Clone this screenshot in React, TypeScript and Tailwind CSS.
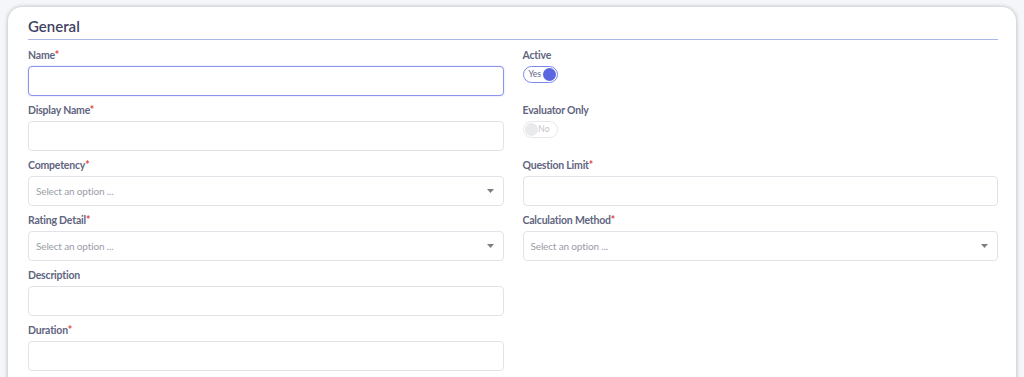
import React from "react";

const Label = ({ text, req }: { text: string; req?: boolean }) => (
  <div className="h-[14px] text-[10.5px] leading-[14px] font-bold tracking-[-0.2px] text-[#5f6580] mb-[4px]">
    {text}
    {req && <span className="text-[#e53e3e]">*</span>}
  </div>
);

const Input = ({ focus }: { focus?: boolean }) => (
  <div
    className={
      focus
        ? "h-[30px] rounded-[4px] border border-[#8b93ea] bg-white shadow-[0_0_2px_rgba(110,120,230,0.35)]"
        : "h-[30px] rounded-[4px] border border-[#e1e3e9] bg-white"
    }
  />
);

const Select = () => (
  <div className="h-[30px] rounded-[4px] border border-[#e1e3e9] bg-white flex items-center justify-between pl-[7px] pr-[9px]">
    <span className="text-[10px] tracking-[-0.15px] text-[#9b9da8]">Select an option ...</span>
    <svg width="7" height="4" viewBox="0 0 7 4">
      <path d="M0 0 L7 0 L3.5 4 Z" fill="#7d7f87" />
    </svg>
  </div>
);

const ToggleOn = () => (
  <div className="h-[30px]">
    <div className="w-[35px] h-[17px] rounded-full border border-[#7d86ea] bg-white flex items-center justify-between pl-[5px] pr-[1px]">
      <span className="text-[8.5px] leading-none text-[#5d6383]">Yes</span>
      <span className="w-[13px] h-[13px] rounded-full bg-[#5a67df]" />
    </div>
  </div>
);

const ToggleOff = () => (
  <div className="h-[30px]">
    <div className="w-[35px] h-[17px] rounded-full border border-[#e6e7ea] bg-white flex items-center justify-between pl-[1px] pr-[7px]">
      <span className="w-[13px] h-[13px] rounded-full bg-[#e9eaec]" />
      <span className="text-[8.5px] leading-none text-[#c3c5cb]">No</span>
    </div>
  </div>
);

const Cell = ({ label, req, children }: { label?: string; req?: boolean; children?: React.ReactNode }) => (
  <div className="h-[55px]">
    {label && <Label text={label} req={req} />}
    {children}
  </div>
);

export default function App() {
  return (
    <div
      className="w-[1024px] h-[377px] overflow-hidden bg-[#f5f6fa] pt-[7px] pl-[8px] pr-[8px]"
      style={{ fontFamily: 'Lato, "Open Sans", sans-serif' }}
    >
      <div className="h-[420px] bg-white rounded-[14px] shadow-[0_0_4px_rgba(0,0,0,0.28)] pl-[20px] pr-[18px] pt-[9px]">
        <div className="border-b border-[#a9b6e6] pb-[3px] text-[15px] leading-[20px] font-semibold text-[#3f4363]">
          General
        </div>
        <div className="mt-[8px] grid grid-cols-2 gap-x-[19px]">
          <Cell label="Name" req>
            <Input focus />
          </Cell>
          <Cell label="Active">
            <ToggleOn />
          </Cell>
          <Cell label="Display Name" req>
            <Input />
          </Cell>
          <Cell label="Evaluator Only">
            <ToggleOff />
          </Cell>
          <Cell label="Competency" req>
            <Select />
          </Cell>
          <Cell label="Question Limit" req>
            <Input />
          </Cell>
          <Cell label="Rating Detail" req>
            <Select />
          </Cell>
          <Cell label="Calculation Method" req>
            <Select />
          </Cell>
          <Cell label="Description">
            <Input />
          </Cell>
          <Cell />
          <Cell label="Duration" req>
            <Input />
          </Cell>
          <Cell />
        </div>
      </div>
    </div>
  );
}
